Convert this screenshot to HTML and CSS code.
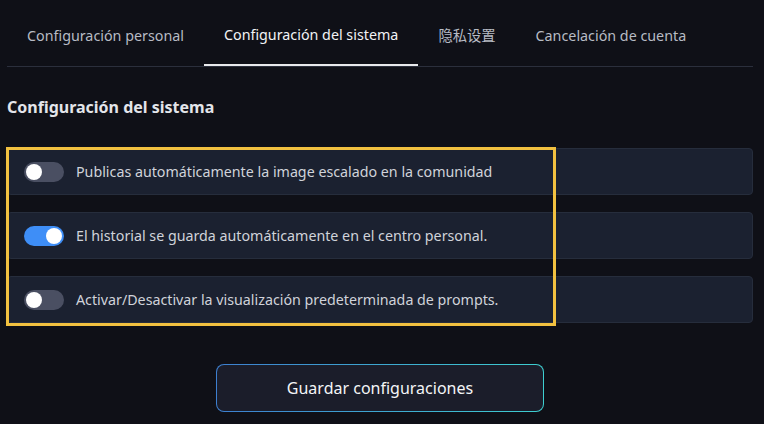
FILE: index.html
```html
<!DOCTYPE html>
<html lang="es">
<head>
<meta charset="utf-8">
<link rel="stylesheet" href="styles.css">
</head>
<body>
<div class="page">
  <nav class="tabs">
    <div class="tab">Configuración personal</div>
    <div class="tab active">Configuración del sistema</div>
    <div class="tab">隐私设置</div>
    <div class="tab">Cancelación de cuenta</div>
  </nav>
  <h2 class="title">Configuración del sistema</h2>
  <div class="list">
    <div class="row"><span class="switch"><span class="knob"></span></span><span class="label">Publicas automáticamente la image escalado en la comunidad</span></div>
    <div class="row"><span class="switch on"><span class="knob"></span></span><span class="label">El historial se guarda automáticamente en el centro personal.</span></div>
    <div class="row"><span class="switch"><span class="knob"></span></span><span class="label">Activar/Desactivar la visualización predeterminada de prompts.</span></div>
    <div class="highlight"></div>
  </div>
  <div class="actions">
    <button class="save">Guardar configuraciones</button>
  </div>
</div>
</body>
</html>
```
FILE: styles.css
```css
* { box-sizing: border-box; }
html, body { margin: 0; padding: 0; background: #0f1017; }
body {
  font-family: "Noto Sans", "Noto Sans CJK SC", sans-serif;
  color: #d3d6dd;
  width: 764px;
  height: 424px;
  overflow: hidden;
}
.page { margin: 0 11px 0 7px; }
.tabs {
  display: flex;
  height: 67px;
  border-bottom: 1px solid #2b2f3c;
}
.tab {
  padding: 0 20px;
  height: 66px;
  line-height: 72px;
  font-size: 14.3px;
  color: #b7bbc4;
  white-space: nowrap;
}
.tab.active {
  color: #f2f3f5;
  border-bottom: 2px solid #e8e9ec;
  height: 66px;
  line-height: 70px;
}
.title {
  margin: 28px 0 0 0;
  font-size: 16px;
  font-weight: 700;
  color: #e3e5ea;
  line-height: 24px;
}
.list {
  position: relative;
  margin-top: 29px;
  display: flex;
  flex-direction: column;
  gap: 17px;
}
.row {
  height: 47px;
  background: #1b2130;
  border: 1px solid #262d3c;
  border-radius: 4px;
  display: flex;
  align-items: center;
  padding-left: 16px;
}
.switch {
  position: relative;
  width: 40px;
  height: 20px;
  border-radius: 10px;
  background: #4a4f62;
  flex: none;
}
.switch .knob {
  position: absolute;
  top: 2px;
  left: 2px;
  width: 16px;
  height: 16px;
  border-radius: 50%;
  background: #ffffff;
}
.switch.on { background: #3e8ef7; }
.switch.on .knob { left: 22px; }
.label {
  margin-left: 12px;
  font-size: 14.25px;
  color: #d0d3da;
  white-space: nowrap;
}
.highlight {
  position: absolute;
  left: -1px;
  top: -1px;
  width: 550px;
  height: 179px;
  border: 3px solid #f2c140;
  pointer-events: none;
}
.actions {
  display: flex;
  justify-content: center;
  margin-top: 41px;
}
.save {
  width: 328px;
  height: 48px;
  border-radius: 8px;
  border: 1px solid transparent;
  background:
    linear-gradient(#1b1d2a, #1b1d2a) padding-box,
    linear-gradient(90deg, #3d7fd0, #3ecfd0) border-box;
  color: #f4f5f7;
  font-family: "Noto Sans", sans-serif;
  font-size: 16px;
}
```
